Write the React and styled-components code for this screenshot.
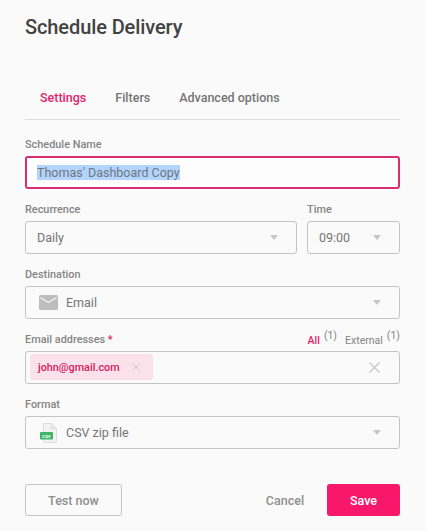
import React from "react";
import styled, { createGlobalStyle } from "styled-components";

const Global = createGlobalStyle`
  html, body { margin: 0; padding: 0; background: #fafafa; }
  body { font-family: Roboto, "Liberation Sans", sans-serif; }
`;

const Page = styled.div`
  width: 426px;
  height: 531px;
  box-sizing: border-box;
  padding: 15px 26px 0 25px;
  overflow: hidden;
  display: flex;
  flex-direction: column;
`;
const Title = styled.h1`
  margin: 0;
  font-size: 20px;
  line-height: 24px;
  font-weight: 500;
  letter-spacing: -0.1px;
  color: #424242;
`;
const Tabs = styled.div`
  margin-top: 47px;
  height: 33px;
  padding: 0 0 0 15px;
  display: flex;
  gap: 29px;
  border-bottom: 1px solid #dcdcdc;
`;
const Tab = styled.div`
  font-size: 12.5px;
  line-height: 24px;
  font-weight: 500;
  color: ${(p) => (p.$active ? "#e5226f" : "#757575")};
`;
const Field = styled.div`
  display: flex;
  flex-direction: column;
  flex: ${(p) => (p.$fixed ? `0 0 ${p.$fixed}px` : "1 1 auto")};
  min-width: 0;
`;
const Stack = styled.div`
  margin-top: 18px;
  display: flex;
  flex-direction: column;
  gap: 14px;
`;
const Row = styled.div`
  display: flex;
  gap: 10px;
`;
const LabelRow = styled.div`
  display: flex;
  justify-content: space-between;
  align-items: flex-start;
  height: 18px;
`;
const Label = styled.label`
  font-size: 10.9px;
  line-height: 14px;
  height: 18px;
  font-weight: 500;
  color: #858585;
`;
const Req = styled.span`
  color: #d81b60;
`;
const Filters = styled.div`
  display: flex;
  gap: 8px;
  font-size: 10.5px;
  line-height: 15px;
`;
const FilterItem = styled.span`
  color: ${(p) => (p.$active ? "#e5226f" : "#858585")};
  font-weight: ${(p) => (p.$active ? 500 : 400)};
`;
const Count = styled.sup`
  font-size: 10.5px;
  line-height: 0;
  margin-left: 4px;
  font-weight: 400;
  color: #858585;
  vertical-align: 5px;
`;
const NameBox = styled.div`
  height: 33px;
  box-sizing: border-box;
  border: 2px solid #d62f72;
  border-radius: 3px;
  background: #fdfdfd;
  padding: 0 10px;
  display: flex;
  align-items: center;
`;
const Selected = styled.span`
  font-size: 12.5px;
  line-height: 15px;
  color: #6f7780;
  background: #b3d4fc;
`;
const Select = styled.div`
  height: 33px;
  box-sizing: border-box;
  border: 1px solid #c4c4c4;
  border-radius: 3px;
  display: flex;
  align-items: center;
  padding: ${(p) => (p.$icon ? "0 18px 0 13px" : "0 18px 0 11px")};
  font-size: 12.5px;
  color: #757575;
`;
const SelectText = styled.span`
  flex: 1;
`;
const Caret = styled.span`
  width: 0;
  height: 0;
  border-left: 4.5px solid transparent;
  border-right: 4.5px solid transparent;
  border-top: 5px solid #c6c6c6;
`;
const IconWrap = styled.span`
  display: flex;
  margin-left: ${(p) => p.$left || 0}px;
  margin-right: 8px;
`;
const TagBox = styled.div`
  height: 33px;
  box-sizing: border-box;
  border: 1px solid #c4c4c4;
  border-radius: 3px;
  display: flex;
  align-items: center;
  justify-content: space-between;
  padding: 0 19px 0 4px;
`;
const Tag = styled.div`
  width: 123px;
  height: 26px;
  box-sizing: border-box;
  margin-top: -1px;
  padding: 0 13px 0 8px;
  border-radius: 3px;
  background: #fbe2ea;
  color: #d81b60;
  font-size: 10.8px;
  font-weight: 500;
  display: flex;
  align-items: center;
  justify-content: space-between;
`;
const Actions = styled.div`
  margin-top: 35px;
  display: flex;
  align-items: center;
`;
const TestButton = styled.button`
  width: 97px;
  height: 32px;
  border: 1px solid #c4c4c4;
  border-radius: 3px;
  background: transparent;
  color: #8f8f8f;
  font: 500 12.5px Roboto, sans-serif;
  padding: 0;
`;
const CancelButton = styled.button`
  width: 78px;
  height: 32px;
  border: 0;
  background: transparent;
  color: #8f8f8f;
  font: 500 12.5px Roboto, sans-serif;
  padding: 0;
  margin-right: 3px;
  margin-left: auto;
`;
const SaveButton = styled.button`
  width: 73px;
  height: 32px;
  border: 0;
  border-radius: 3px;
  background: #f7186c;
  color: #fff;
  font: 500 12.5px Roboto, sans-serif;
  padding: 0;
`;

const Cross = ({ size, color = "#c8c8c8" }) => (
  <svg width={size} height={size} viewBox="0 0 10 10" fill="none" stroke={color} strokeWidth="1.2">
    <path d="M.5.5l9 9M9.5.5l-9 9" />
  </svg>
);

const MailIcon = () => (
  <svg width="19" height="15" viewBox="0 0 19 15">
    <rect width="19" height="15" rx="1.5" fill="#bdbdbd" />
    <path d="M1.5 2.6l8 5 8-5" fill="none" stroke="#f2f2f2" strokeWidth="1.3" />
  </svg>
);

const CsvIcon = () => (
  <svg width="18" height="20" viewBox="0 0 18 20">
    <path d="M3.5.5h8l5 5v13.2a.8.8 0 0 1-.8.8H4.3a.8.8 0 0 1-.8-.8z" fill="#f2f2f2" stroke="#dcdcdc" />
    <path d="M11.5.5v5h5" fill="#e4e4e4" stroke="#dcdcdc" />
    <rect x="0" y="9" width="13" height="7.5" rx="1" fill="#3fb56a" />
    <text x="6.5" y="14.8" textAnchor="middle" fontSize="4.4" fontWeight="700" fontFamily="Roboto, sans-serif" fill="#fff">CSV</text>
  </svg>
);

export default function App() {
  return (
    <Page>
      <Global />
      <Title>Schedule Delivery</Title>
      <Tabs>
        <Tab $active>Settings</Tab>
        <Tab>Filters</Tab>
        <Tab>Advanced options</Tab>
      </Tabs>
      <Stack>
        <Field>
          <Label>Schedule Name</Label>
          <NameBox>
            <Selected>Thomas' Dashboard Copy</Selected>
          </NameBox>
        </Field>
        <Row>
          <Field>
            <Label>Recurrence</Label>
            <Select>
              <SelectText>Daily</SelectText>
              <Caret />
            </Select>
          </Field>
          <Field $fixed={93}>
            <Label>Time</Label>
            <Select>
              <SelectText>09:00</SelectText>
              <Caret />
            </Select>
          </Field>
        </Row>
        <Field>
          <Label>Destination</Label>
          <Select $icon>
            <IconWrap><MailIcon /></IconWrap>
            <SelectText>Email</SelectText>
            <Caret />
          </Select>
        </Field>
        <Field>
          <LabelRow>
            <Label>Email addresses <Req>*</Req></Label>
            <Filters>
              <FilterItem $active>All<Count>(1)</Count></FilterItem>
              <FilterItem>External<Count>(1)</Count></FilterItem>
            </Filters>
          </LabelRow>
          <TagBox>
            <Tag>
              john@gmail.com
              <Cross size={8} />
            </Tag>
            <Cross size={11} />
          </TagBox>
        </Field>
        <Field>
          <Label>Format</Label>
          <Select $icon>
            <IconWrap $left={1}><CsvIcon /></IconWrap>
            <SelectText>CSV zip file</SelectText>
            <Caret />
          </Select>
        </Field>
      </Stack>
      <Actions>
        <TestButton>Test now</TestButton>
        <CancelButton>Cancel</CancelButton>
        <SaveButton>Save</SaveButton>
      </Actions>
    </Page>
  );
}
